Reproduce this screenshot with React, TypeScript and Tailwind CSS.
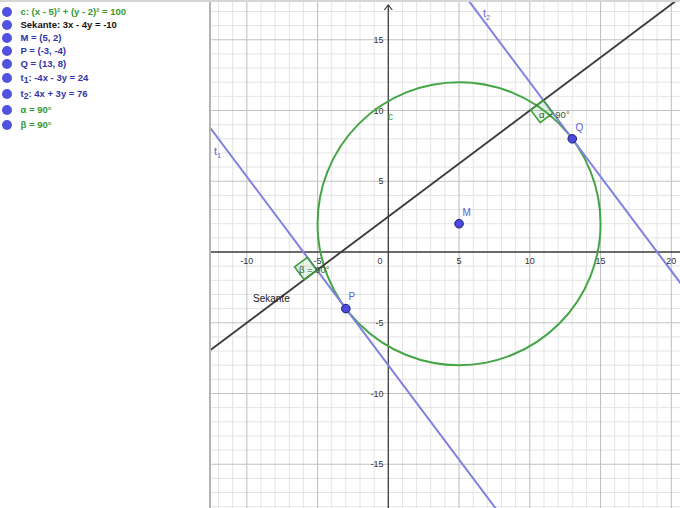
import React from 'react';

type Row = { text: React.ReactNode; color: string; h: string };

const rows: Row[] = [
  { text: <>c: (x - 5)² + (y - 2)² = 100</>, color: 'text-[#339933]', h: 'h-[13px]' },
  { text: <>Sekante: 3x - 4y = -10</>, color: 'text-[#111111]', h: 'h-[13px]' },
  { text: <>M = (5, 2)</>, color: 'text-[#3333a8]', h: 'h-[13px]' },
  { text: <>P = (-3, -4)</>, color: 'text-[#3333a8]', h: 'h-[13px]' },
  { text: <>Q = (13, 8)</>, color: 'text-[#3333a8]', h: 'h-[13px]' },
  { text: <>t<sub className="text-[8.5px]">1</sub>: -4x - 3y = 24</>, color: 'text-[#3333a8]', h: 'h-[15px]' },
  { text: <>t<sub className="text-[8.5px]">2</sub>: 4x + 3y = 76</>, color: 'text-[#3333a8]', h: 'h-[17px]' },
  { text: <>α = 90°</>, color: 'text-[#339933]', h: 'h-[15px]' },
  { text: <>β = 90°</>, color: 'text-[#339933]', h: 'h-[15px]' },
];

// screen mapping for the graphics view (page coordinates)
const OX = 388.3;
const OY = 252;
const S = 14.15;
const X = (x: number) => OX + S * x;
const Y = (y: number) => OY - S * y;

const FONT = '"Liberation Sans", Arial, sans-serif';

const range = (a: number, b: number) => Array.from({ length: b - a + 1 }, (_, i) => a + i);

// right-angle marker: corner I, two unit screen directions
const square = (ix: number, iy: number, d1: [number, number], d2: [number, number], s: number) => {
  const a = [ix + s * d1[0], iy + s * d1[1]];
  const c = [ix + s * d2[0], iy + s * d2[1]];
  const b = [a[0] + c[0] - ix, a[1] + c[1] - iy];
  return `${ix},${iy} ${a[0]},${a[1]} ${b[0]},${b[1]} ${c[0]},${c[1]}`;
};

const Graph: React.FC = () => {
  const t1 = (x: number) => (-4 * x - 24) / 3;
  const t2 = (x: number) => (76 - 4 * x) / 3;
  const sek = (x: number) => (3 * x + 10) / 4;

  // intersections
  const ax = 274 / 25;
  const ay = sek(ax);
  const bx = -126 / 25;
  const by = sek(bx);

  const xLabels = [-10, -5, 5, 10, 15, 20];
  const yLabels = [15, 10, 5, -5, -10, -15];

  return (
    <svg width={469} height={506} viewBox="211 2 469 506" className="block">
      <rect x={211} y={2} width={469} height={506} fill="#ffffff" />
      {/* minor grid */}
      {range(-13, 21).filter(i => i % 5 !== 0).map(i => (
        <line key={`vx${i}`} x1={X(i)} y1={0} x2={X(i)} y2={508} stroke="#e4e4e4" strokeWidth={1} />
      ))}
      {range(-18, 18).filter(j => j % 5 !== 0).map(j => (
        <line key={`hy${j}`} x1={211} y1={Y(j)} x2={680} y2={Y(j)} stroke="#e4e4e4" strokeWidth={1} />
      ))}
      {/* major grid */}
      {[-10, -5, 5, 10, 15, 20].map(i => (
        <line key={`Vx${i}`} x1={X(i)} y1={0} x2={X(i)} y2={508} stroke="#c2c2c2" strokeWidth={1.1} />
      ))}
      {[15, 10, 5, -5, -10, -15].map(j => (
        <line key={`Hy${j}`} x1={211} y1={Y(j)} x2={680} y2={Y(j)} stroke="#c2c2c2" strokeWidth={1.1} />
      ))}
      {/* axes */}
      <line x1={211} y1={OY} x2={680} y2={OY} stroke="#3a3a3a" strokeWidth={1.3} />
      <line x1={OX} y1={5} x2={OX} y2={508} stroke="#3a3a3a" strokeWidth={1.3} />
      <polyline points={`${OX - 4},${10} ${OX},${5} ${OX + 4},${10}`} fill="none" stroke="#3a3a3a" strokeWidth={1.2} />

      {/* axis labels */}
      {xLabels.map(v => (
        <text key={`xl${v}`} x={X(v)} y={263.5} fontSize={9} fontFamily={FONT} fill="#333" textAnchor="middle">{v}</text>
      ))}
      <text x={380} y={263.5} fontSize={9} fontFamily={FONT} fill="#333" textAnchor="middle">0</text>
      {yLabels.map(v => (
        <text key={`yl${v}`} x={383.5} y={Y(v) + 3.2} fontSize={9} fontFamily={FONT} fill="#333" textAnchor="end">{v}</text>
      ))}

      {/* circle c */}
      <circle cx={X(5)} cy={Y(2)} r={10 * S} fill="none" stroke="#44a544" strokeWidth={2} />
      <text x={388} y={119.5} fontSize={10} fontFamily={FONT} fill="#3c9c3c">c</text>

      {/* tangents */}
      <line x1={X(-20)} y1={Y(t1(-20))} x2={X(20)} y2={Y(t1(20))} stroke="#8080e2" strokeWidth={2} />
      <line x1={X(5)} y1={Y(t2(5))} x2={X(30)} y2={Y(t2(30))} stroke="#8080e2" strokeWidth={2} />
      {/* secant */}
      <line x1={X(-20)} y1={Y(sek(-20))} x2={X(25)} y2={Y(sek(25))} stroke="#363636" strokeWidth={1.8} />

      {/* right angle markers */}
      <polygon
        points={square(X(ax), Y(ay), [-0.8, 0.6], [0.6, 0.8], 16)}
        fill="rgba(68,165,68,0.12)"
        stroke="#3f9f3f"
        strokeWidth={1.6}
      />
      <polygon
        points={square(X(bx), Y(by), [-0.8, 0.6], [-0.6, -0.8], 16)}
        fill="rgba(68,165,68,0.12)"
        stroke="#3f9f3f"
        strokeWidth={1.6}
      />
      <text x={539} y={118} fontSize={9.5} fontFamily={FONT} fill="#2f5f2f">α = 90°</text>
      <text x={299} y={272.5} fontSize={9.5} fontFamily={FONT} fill="#2f5f2f">β = 90°</text>

      {/* labels */}
      <text x={214} y={155} fontSize={11} fontFamily={FONT} fill="#6a6ad0">
        t<tspan fontSize={7.5} dy={3}>1</tspan>
      </text>
      <text x={483} y={17} fontSize={11} fontFamily={FONT} fill="#6a6ad0">
        t<tspan fontSize={7.5} dy={3}>2</tspan>
      </text>
      <text x={253} y={301.5} fontSize={10} fontFamily={FONT} fill="#222">Sekante</text>

      {/* points */}
      {[
        { p: [5, 2], l: 'M', lx: 462.5, ly: 215.5 },
        { p: [-3, -4], l: 'P', lx: 348.5, ly: 300 },
        { p: [13, 8], l: 'Q', lx: 575.5, ly: 130.5 },
      ].map(pt => (
        <g key={pt.l}>
          <circle cx={X(pt.p[0])} cy={Y(pt.p[1])} r={4.3} fill="#4a4ae0" stroke="#1c1c70" strokeWidth={1} />
          <text x={pt.lx} y={pt.ly} fontSize={10} fontFamily={FONT} fill="#6060d0">{pt.l}</text>
        </g>
      ))}
    </svg>
  );
};

export default function App() {
  return (
    <div className="flex w-[680px] h-[508px] bg-white overflow-hidden border-t-2 border-[#d6d6d6]" style={{ fontFamily: FONT }}>
      {/* Algebra view */}
      <div className="w-[209px] shrink-0 flex flex-col pt-[3.5px]">
        {rows.map((r, i) => (
          <div key={i} className={`flex items-center ${r.h}`}>
            <span className="ml-[2px] w-[9.5px] h-[9.5px] rounded-full bg-[#5252e0] shrink-0" />
            <span className={`ml-[9px] text-[9.5px] font-bold leading-none whitespace-nowrap ${r.color}`}>{r.text}</span>
          </div>
        ))}
      </div>
      {/* separator */}
      <div className="w-[2px] shrink-0 bg-[#b4b4b4]" />
      {/* Graphics view */}
      <div className="flex-1 overflow-hidden">
        <Graph />
      </div>
    </div>
  );
}
